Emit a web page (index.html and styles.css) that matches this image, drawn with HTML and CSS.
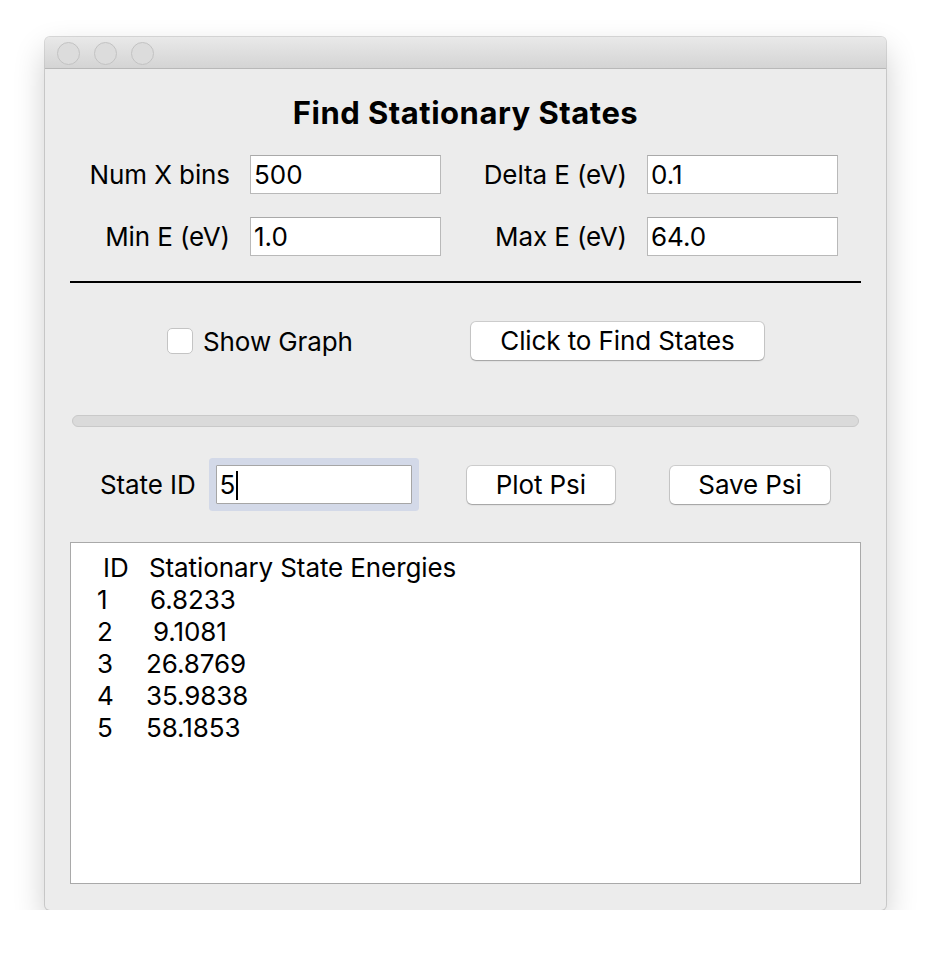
FILE: index.html
```html
<!DOCTYPE html>
<html>
<head>
<meta charset="utf-8">
<link rel="stylesheet" href="styles.css">
</head>
<body>
<div class="window">
  <div class="titlebar">
    <span class="light"></span><span class="light"></span><span class="light"></span>
  </div>
  <div class="content">
    <h1 class="heading">Find Stationary States</h1>
    <div class="params">
      <label class="plabel">Num X bins</label><div class="field">500</div>
      <label class="plabel">Delta E (eV)</label><div class="field">0.1</div>
      <label class="plabel">Min E (eV)</label><div class="field">1.0</div>
      <label class="plabel">Max E (eV)</label><div class="field">64.0</div>
    </div>
    <div class="sep"></div>
    <div class="row2">
      <div class="check"><span class="box"></span><span>Show Graph</span></div>
      <div class="btn btn-find">Click to Find States</div>
    </div>
    <div class="progress"></div>
    <div class="row3">
      <div class="stateid">
        <span class="slabel">State ID</span>
        <div class="field field-focus">5<span class="caret"></span></div>
      </div>
      <div class="btn btn-plot">Plot Psi</div>
      <div class="btn btn-save">Save Psi</div>
    </div>
    <div class="output">
      <div class="line"><span class="c1 hd">ID</span><span class="c2">Stationary State Energies</span></div>
      <div class="line"><span class="c1">1</span><span class="c2 p4">6.8233</span></div>
      <div class="line"><span class="c1">2</span><span class="c2 p7">9.1081</span></div>
      <div class="line"><span class="c1">3</span><span class="c2">26.8769</span></div>
      <div class="line"><span class="c1">4</span><span class="c2">35.9838</span></div>
      <div class="line"><span class="c1">5</span><span class="c2">58.1853</span></div>
    </div>
  </div>
</div>
</body>
</html>
```
FILE: styles.css
```css
html, body {
  margin: 0;
  padding: 0;
  background: #ffffff;
}
body {
  font-family: Inter, "Noto Sans", "Liberation Sans", sans-serif;
  color: #000;
  padding: 37px 0 0 45px;
}
.window {
  width: 841px;
  height: 873px;
  box-sizing: border-box;
  background: #ececec;
  border-radius: 5px;
  box-shadow: 0 0 0 1px rgba(0,0,0,0.14), 0 14px 32px rgba(0,0,0,0.2);
  overflow: hidden;
}
.titlebar {
  height: 32px;
  box-sizing: border-box;
  background: linear-gradient(#e9e9e9, #d4d4d4);
  border-bottom: 1px solid #b8b8b8;
  display: flex;
  align-items: center;
  gap: 14px;
  padding-left: 12px;
  padding-top: 1px;
}
.light {
  width: 21px;
  height: 21px;
  border-radius: 50%;
  border: 1px solid #c2c2c2;
  background: #dcdcdc;
}
.content {
  padding: 0 25px 26px 25px;
}
.heading {
  margin: 27px 0 0 0;
  text-align: center;
  font-size: 31px;
  line-height: 34px;
  font-weight: 700;
  letter-spacing: 0.5px;
}
.params {
  margin-top: 25px;
  display: grid;
  grid-template-columns: 180px 191px 206px 191px;
  row-gap: 23px;
  align-items: center;
}
.plabel {
  text-align: right;
  padding-right: 20px;
  font-size: 26px;
  letter-spacing: -0.1px;
}
.field {
  height: 39px;
  box-sizing: border-box;
  background: #fff;
  border: 1px solid #b9b9b9;
  border-top-color: #a9a9a9;
  font-size: 26px;
  line-height: 37px;
  padding-left: 3px;
}
.sep {
  margin-top: 25px;
  height: 2px;
  background: #000;
}
.row2 {
  margin-top: 39px;
  height: 38px;
  padding: 0 97px;
  display: flex;
  align-items: center;
  justify-content: space-between;
}
.check {
  display: flex;
  align-items: center;
  gap: 10px;
  font-size: 26px;
  letter-spacing: -0.1px;
}
.box {
  width: 26px;
  height: 26px;
  box-sizing: border-box;
  border-radius: 5px;
  background: #fff;
  border: 1px solid #c4c4c4;
}
.btn {
  height: 38px;
  box-sizing: border-box;
  background: #fff;
  border-radius: 5px;
  box-shadow: 0 0 0 1px rgba(0,0,0,0.13), 0 1px 1.5px rgba(0,0,0,0.22);
  font-size: 26px;
  line-height: 38px;
  text-align: center;
  letter-spacing: -0.1px;
}
.btn-find { width: 293px; }
.btn-plot { width: 148px; }
.btn-save { width: 160px; }
.progress {
  margin: 55px 2px 0 2px;
  height: 12px;
  box-sizing: border-box;
  border-radius: 6px;
  background: #dadada;
  border: 1px solid #c9c9c9;
}
.row3 {
  margin-top: 38px;
  padding: 0 31px 0 30px;
  display: flex;
  align-items: center;
  justify-content: space-between;
}
.stateid {
  display: flex;
  align-items: center;
  gap: 20px;
  font-size: 26px;
  letter-spacing: -0.1px;
}
.field-focus {
  width: 196px;
  border-radius: 1px;
  box-shadow: 0 0 0 7px #d3d9e8;
  border-color: #a6a6a6;
}
.caret {
  display: inline-block;
  width: 2px;
  height: 29px;
  background: #000;
  vertical-align: -6px;
  margin-left: 1px;
}
.output {
  margin-top: 38px;
  height: 342px;
  box-sizing: border-box;
  background: #fff;
  border: 1px solid #a9a9a9;
  padding: 9px 0 0 0;
  font-size: 26px;
  letter-spacing: -0.1px;
}
.line {
  display: flex;
  line-height: 32px;
}
.c1 {
  flex: none;
  width: 75px;
  padding-left: 26px;
  box-sizing: border-box;
}
.hd {
  width: 78px;
  padding-left: 32px;
}
.p4 { padding-left: 4px; }
.p7 { padding-left: 7px; }
```
